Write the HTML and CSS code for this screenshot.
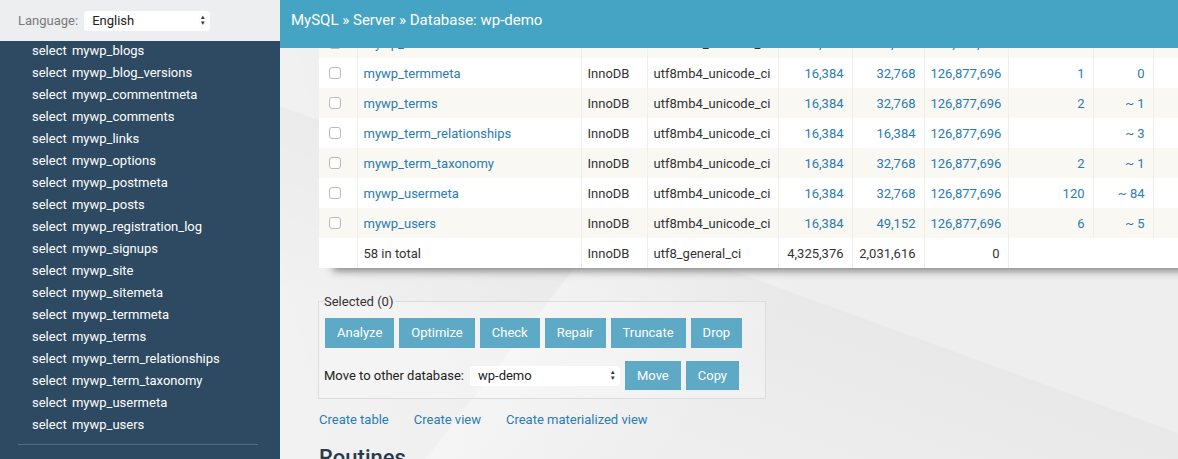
FILE: index.html
```html
<!DOCTYPE html>
<html lang="en">
<head>
<meta charset="utf-8">
<title>Database: wp-demo - Adminer</title>
<link rel="stylesheet" href="styles.css">
</head>
<body>
<div class="page">
  <aside class="sidebar">
    <div class="lang">
      <span class="lang-label">Language:</span>
      <span class="select lang-select">English<span class="arrows">&#x25B4;<br>&#x25BE;</span></span>
    </div>
    <div class="tables">
      <ul class="table-list">
        <li><a href="#">select</a> <a href="#">mywp_blogs</a></li>
        <li><a href="#">select</a> <a href="#">mywp_blog_versions</a></li>
        <li><a href="#">select</a> <a href="#">mywp_commentmeta</a></li>
        <li><a href="#">select</a> <a href="#">mywp_comments</a></li>
        <li><a href="#">select</a> <a href="#">mywp_links</a></li>
        <li><a href="#">select</a> <a href="#">mywp_options</a></li>
        <li><a href="#">select</a> <a href="#">mywp_postmeta</a></li>
        <li><a href="#">select</a> <a href="#">mywp_posts</a></li>
        <li><a href="#">select</a> <a href="#">mywp_registration_log</a></li>
        <li><a href="#">select</a> <a href="#">mywp_signups</a></li>
        <li><a href="#">select</a> <a href="#">mywp_site</a></li>
        <li><a href="#">select</a> <a href="#">mywp_sitemeta</a></li>
        <li><a href="#">select</a> <a href="#">mywp_termmeta</a></li>
        <li><a href="#">select</a> <a href="#">mywp_terms</a></li>
        <li><a href="#">select</a> <a href="#">mywp_term_relationships</a></li>
        <li><a href="#">select</a> <a href="#">mywp_term_taxonomy</a></li>
        <li><a href="#">select</a> <a href="#">mywp_usermeta</a></li>
        <li><a href="#">select</a> <a href="#">mywp_users</a></li>
      </ul>
      <hr class="sep">
    </div>
  </aside>
  <main class="main">
    <header class="breadcrumb">
      <a href="#">MySQL</a> &raquo; <a href="#">Server</a> &raquo; Database: wp-demo
    </header>
    <div class="scroll">
      <div class="content">
        <table class="tbl">
          <colgroup>
            <col class="c-chk"><col class="c-name"><col class="c-eng"><col class="c-coll">
            <col class="c-n1"><col class="c-n2"><col class="c-n3"><col class="c-n4"><col class="c-n5"><col class="c-n6">
          </colgroup>
          <tbody>
            <tr class="odd"><td><input type="checkbox" class="chk"></td><td><a href="#">mywp_sitemeta</a></td><td>InnoDB</td><td>utf8mb4_unicode_ci</td><td class="num"><a href="#">16,384</a></td><td class="num"><a href="#">32,768</a></td><td class="num"><a href="#">126,877,696</a></td><td class="num"><a href="#">1</a></td><td class="num"><a href="#">~ 1</a></td><td></td></tr>
            <tr><td><input type="checkbox" class="chk"></td><td><a href="#">mywp_termmeta</a></td><td>InnoDB</td><td>utf8mb4_unicode_ci</td><td class="num"><a href="#">16,384</a></td><td class="num"><a href="#">32,768</a></td><td class="num"><a href="#">126,877,696</a></td><td class="num"><a href="#">1</a></td><td class="num"><a href="#">0</a></td><td></td></tr>
            <tr class="odd"><td><input type="checkbox" class="chk"></td><td><a href="#">mywp_terms</a></td><td>InnoDB</td><td>utf8mb4_unicode_ci</td><td class="num"><a href="#">16,384</a></td><td class="num"><a href="#">32,768</a></td><td class="num"><a href="#">126,877,696</a></td><td class="num"><a href="#">2</a></td><td class="num"><a href="#">~ 1</a></td><td></td></tr>
            <tr><td><input type="checkbox" class="chk"></td><td><a href="#">mywp_term_relationships</a></td><td>InnoDB</td><td>utf8mb4_unicode_ci</td><td class="num"><a href="#">16,384</a></td><td class="num"><a href="#">16,384</a></td><td class="num"><a href="#">126,877,696</a></td><td class="num"></td><td class="num"><a href="#">~ 3</a></td><td></td></tr>
            <tr class="odd"><td><input type="checkbox" class="chk"></td><td><a href="#">mywp_term_taxonomy</a></td><td>InnoDB</td><td>utf8mb4_unicode_ci</td><td class="num"><a href="#">16,384</a></td><td class="num"><a href="#">32,768</a></td><td class="num"><a href="#">126,877,696</a></td><td class="num"><a href="#">2</a></td><td class="num"><a href="#">~ 1</a></td><td></td></tr>
            <tr><td><input type="checkbox" class="chk"></td><td><a href="#">mywp_usermeta</a></td><td>InnoDB</td><td>utf8mb4_unicode_ci</td><td class="num"><a href="#">16,384</a></td><td class="num"><a href="#">32,768</a></td><td class="num"><a href="#">126,877,696</a></td><td class="num"><a href="#">120</a></td><td class="num"><a href="#">~ 84</a></td><td></td></tr>
            <tr class="odd"><td><input type="checkbox" class="chk"></td><td><a href="#">mywp_users</a></td><td>InnoDB</td><td>utf8mb4_unicode_ci</td><td class="num"><a href="#">16,384</a></td><td class="num"><a href="#">49,152</a></td><td class="num"><a href="#">126,877,696</a></td><td class="num"><a href="#">6</a></td><td class="num"><a href="#">~ 5</a></td><td></td></tr>
            <tr class="total"><td></td><td>58 in total</td><td>InnoDB</td><td>utf8_general_ci</td><td class="num">4,325,376</td><td class="num">2,031,616</td><td class="num">0</td><td class="blank" colspan="3"></td></tr>
          </tbody>
        </table>

        <fieldset class="selected">
          <legend>Selected (0)</legend>
          <div class="btn-row">
            <button class="btn">Analyze</button>
            <button class="btn">Optimize</button>
            <button class="btn">Check</button>
            <button class="btn">Repair</button>
            <button class="btn">Truncate</button>
            <button class="btn">Drop</button>
          </div>
          <div class="move-row">
            <span class="move-label">Move to other database:</span>
            <span class="select db-select">wp-demo<span class="arrows">&#x25B4;<br>&#x25BE;</span></span>
            <button class="btn">Move</button>
            <button class="btn">Copy</button>
          </div>
        </fieldset>

        <p class="links">
          <a href="#">Create table</a>
          <a href="#">Create view</a>
          <a href="#">Create materialized view</a>
        </p>

        <h3 class="routines">Routines</h3>
      </div>
    </div>
  </main>
</div>
</body>
</html>
```

FILE: styles.css
```css
* { box-sizing: border-box; }

html, body {
  margin: 0;
  padding: 0;
  width: 1178px;
  height: 459px;
  overflow: hidden;
}

body {
  font-family: Roboto, "Liberation Sans", Arial, sans-serif;
  font-size: 13px;
  color: #333;
  background: #efefef;
}

a { color: #2a7cb0; text-decoration: none; }

.page {
  display: grid;
  grid-template-columns: 280px 898px;
  height: 459px;
}

/* ---------- sidebar ---------- */
.sidebar {
  display: flex;
  flex-direction: column;
  background: #2e4a63;
  overflow: hidden;
}

.lang {
  height: 41px;
  background: #eceeef;
  display: flex;
  align-items: center;
  padding: 0 0 0 18px;
  gap: 6px;
  flex: none;
}

.lang-label { color: #7a7a7a; font-size: 13px; }

.select {
  position: relative;
  display: flex;
  align-items: center;
  background: #fff;
  border-radius: 4px;
  height: 20px;
  color: #222;
  font-size: 13px;
}

.lang-select { width: 126px; padding-left: 8px; }
.db-select { width: 150px; padding-left: 8px; }

.arrows {
  position: absolute;
  right: 5px;
  top: 3px;
  font-size: 7px;
  line-height: 6px;
  color: #333;
  text-align: center;
}

.tables { padding: 0; }

.table-list {
  list-style: none;
  margin: -1px 0 0;
  padding: 0 0 0 32px;
}

.table-list li {
  line-height: 22px;
  height: 22px;
  white-space: nowrap;
}

.table-list a { color: #fff; font-size: 13px; }
.table-list a:first-child { margin-right: 2px; }

.sep {
  margin: 8px 22px 0 18px;
  border: 0;
  border-top: 1px solid #4f6a84;
  height: 0;
}

/* ---------- main ---------- */
.main {
  display: flex;
  flex-direction: column;
  overflow: hidden;
  background:
    linear-gradient(128deg, rgba(255,255,255,0) 40%, rgba(255,255,255,.35) 40.2%, rgba(255,255,255,0) 60%),
    linear-gradient(200deg, rgba(0,0,0,0) 55%, rgba(0,0,0,.025) 55.2%, rgba(0,0,0,0) 80%),
    linear-gradient(75deg, rgba(255,255,255,.25) 0%, rgba(255,255,255,0) 30%),
    #eeeeee;
}

.breadcrumb {
  height: 48px;
  flex: none;
  background: #45a4c4;
  color: #fff;
  font-size: 15px;
  padding: 11px 0 0 11px;
  line-height: 19px;
  position: relative;
  z-index: 2;
}

.breadcrumb a { color: #fff; }

.scroll {
  flex: 1;
  overflow: hidden;
}

.content {
  margin-top: -20px;
  padding-left: 39px;
}

/* table */
.tbl {
  border-collapse: collapse;
  table-layout: fixed;
  width: 894px;
  background: #fff;
  box-shadow: 10px 7px 8px -4px rgba(0,0,0,.45);
}

.c-chk { width: 38px; }
.c-name { width: 224px; }
.c-eng { width: 66px; }
.c-coll { width: 131px; }
.c-n1 { width: 74px; }
.c-n2 { width: 72px; }
.c-n3 { width: 84px; }
.c-n4 { width: 85px; }
.c-n5 { width: 60px; }
.c-n6 { width: 60px; }

.tbl td {
  height: 30px;
  padding: 0 6px;
  border-right: 1px solid #f0eeea;
  white-space: nowrap;
  overflow: hidden;
  font-size: 13px;
  color: #333;
}

.tbl td:first-child { padding: 0 0 0 10px; }

.tbl td.num { text-align: right; padding-right: 8px; }

.tbl tr.odd td { background: #f9f8f3; }

.tbl td.blank { border-right: 0; }

.chk {
  appearance: none;
  -webkit-appearance: none;
  width: 12px;
  height: 12px;
  margin: 0;
  border: 1px solid #b9b9b9;
  border-radius: 3px;
  background: #fff;
  display: block;
}

/* selected fieldset */
.selected {
  margin: 26px 0 0 -1px;
  width: 448px;
  border: 1px solid #dcdcdc;
  background: rgba(255,255,255,.25);
  padding: 9px 6px 8px 6px;
}

.selected legend {
  padding: 0 2px 0 0;
  margin-left: -1px;
  font-size: 13px;
  color: #333;
}

.btn-row, .move-row {
  display: flex;
  align-items: center;
  gap: 5px;
}

.move-row { margin-top: 13px; }

.btn {
  font-family: inherit;
  font-size: 13px;
  color: #fff;
  background: #5eaac6;
  border: 0;
  border-radius: 0;
  height: 30px;
  padding: 0 12px;
  line-height: 30px;
}

.move-row .btn { height: 29px; }

.move-label { font-size: 13px; color: #222; margin-left: -1px; }

.db-select { margin-left: 1px; }

.links {
  margin: 13px 0 0;
  display: flex;
  gap: 25px;
  font-size: 13px;
}

.routines {
  margin: 18px 0 0;
  font-size: 22px;
  font-weight: 500;
  color: #2a3a4a;
}
```
